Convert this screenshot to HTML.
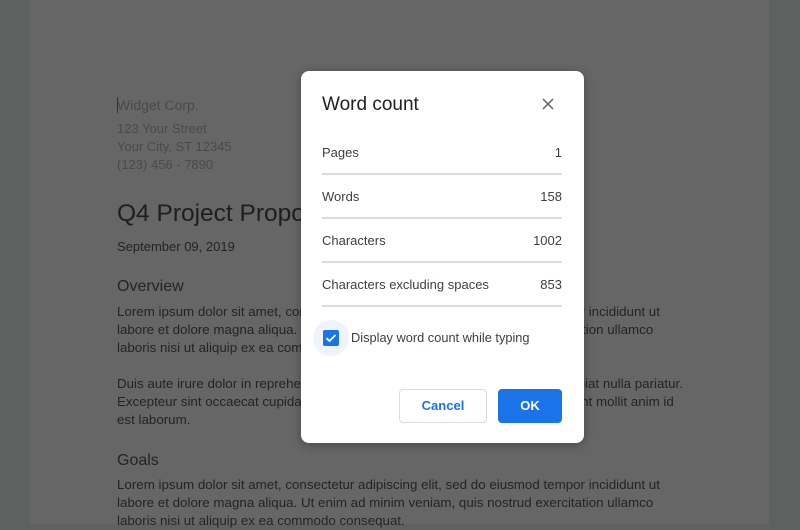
<!DOCTYPE html>
<html><head><meta charset="utf-8"><style>
html,body{margin:0;padding:0}
body{width:800px;height:524px;overflow:hidden;background:#5f6060;position:relative;font-family:"Liberation Sans",Arial,sans-serif}
.page{position:absolute;left:30px;top:0;width:739px;height:524px;background:#666666}
.t{position:absolute;left:117px;white-space:nowrap;line-height:18px}
.addr{color:#4a4a4a;font-size:13px}
.body{color:#242424;font-size:13.35px}
.dlg{position:absolute;left:301px;top:71px;width:283px;height:372px;background:#fff;border-radius:8px;box-shadow:0 2px 10px rgba(0,0,0,.3)}
.d{position:absolute;white-space:nowrap;color:#202124}
.row{position:absolute;left:21px;width:240px;font-size:13px;color:#3c4043;line-height:18px}
.row span{position:absolute;right:0}
.sep{position:absolute;left:21px;width:240px;height:2px;background:#dadce0}
</style></head><body>
<div class="page"></div>
<div style="position:absolute;left:117px;top:97px;width:1px;height:16px;background:#333"></div>
<div class="t addr" style="top:96px;font-size:14px">Widget Corp.</div>
<div class="t addr" style="top:120px">123 Your Street</div>
<div class="t addr" style="top:138px">Your City, ST 12345</div>
<div class="t addr" style="top:156px">(123) 456 - 7890</div>
<div class="t" style="top:199px;font-size:24.5px;line-height:30px;color:#1e1e1e">Q4 Project Proposal</div>
<div class="t body" style="top:238px;font-size:13px">September 09, 2019</div>
<div class="t" style="top:277px;font-size:16px;line-height:20px;color:#242424">Overview</div>
<div class="t body" style="top:303px">Lorem ipsum dolor sit amet, consectetur adipiscing elit, sed do eiusmod tempor incididunt ut</div>
<div class="t body" style="top:321px">labore et dolore magna aliqua. Ut enim ad minim veniam, quis nostrud exercitation ullamco</div>
<div class="t body" style="top:339px">laboris nisi ut aliquip ex ea commodo consequat.</div>
<div class="t body" style="top:375px">Duis aute irure dolor in reprehenderit in voluptate velit esse cillum dolore eu fugiat nulla pariatur.</div>
<div class="t body" style="top:393px">Excepteur sint occaecat cupidatat non proident, sunt in culpa qui officia deserunt mollit anim id</div>
<div class="t body" style="top:411px">est laborum.</div>
<div class="t" style="top:451px;font-size:16px;line-height:20px;color:#242424">Goals</div>
<div class="t body" style="top:476px">Lorem ipsum dolor sit amet, consectetur adipiscing elit, sed do eiusmod tempor incididunt ut</div>
<div class="t body" style="top:494px">labore et dolore magna aliqua. Ut enim ad minim veniam, quis nostrud exercitation ullamco</div>
<div class="t body" style="top:512px">laboris nisi ut aliquip ex ea commodo consequat.</div>

<div class="dlg">
<div class="d" style="left:21px;top:22px;font-size:19px;line-height:24px">Word count</div>
<svg style="position:absolute;left:241px;top:27px" width="12" height="12" viewBox="0 0 12 12"><path d="M1 1L11 11M11 1L1 11" stroke="#5f6368" stroke-width="1.5"/></svg>
<div class="row" style="top:73px">Pages<span>1</span></div>
<div class="sep" style="top:102px"></div>
<div class="row" style="top:117px">Words<span>158</span></div>
<div class="sep" style="top:146px"></div>
<div class="row" style="top:161px">Characters<span>1002</span></div>
<div class="sep" style="top:190px"></div>
<div class="row" style="top:205px">Characters excluding spaces<span>853</span></div>
<div class="sep" style="top:234px"></div>
<div style="position:absolute;left:12px;top:249px;width:36px;height:36px;border-radius:50%;background:#eef3fc"></div>
<div style="position:absolute;left:22px;top:259px;width:16px;height:16px;border-radius:2px;background:#1a73e8"></div>
<svg style="position:absolute;left:22px;top:259px" width="16" height="16" viewBox="0 0 16 16"><path d="M3.5 8.2L6.5 11L12.5 5" fill="none" stroke="#fff" stroke-width="1.8"/></svg>
<div class="d" style="left:50px;top:258px;font-size:12.8px;line-height:18px;color:#3c4043">Display word count while typing</div>
<div style="position:absolute;left:98px;top:318px;width:86px;height:32px;border:1px solid #dadce0;border-radius:4px;color:#1a73e8;font-size:13px;font-weight:bold;text-align:center;line-height:32px">Cancel</div>
<div style="position:absolute;left:197px;top:318px;width:64px;height:34px;background:#1a73e8;border-radius:4px;color:#fff;font-size:13px;font-weight:bold;text-align:center;line-height:34px">OK</div>
</div>
</body></html>
